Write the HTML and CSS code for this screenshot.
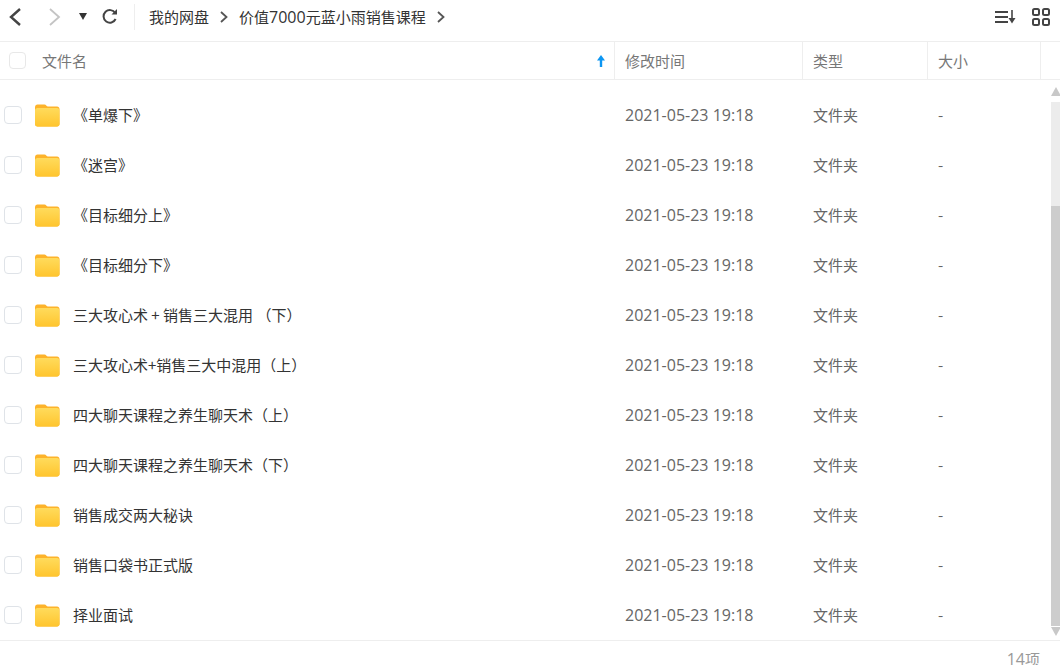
FILE: index.html
```html
<!DOCTYPE html>
<html lang="zh">
<head>
<meta charset="utf-8">
<title>我的网盘</title>
<link rel="stylesheet" href="styles.css">
</head>
<body>
<div class="app">
  <header class="toolbar">
    <svg class="ic-back" width="14" height="20" viewBox="0 0 14 20"><path d="M12 2 3 10l9 8" fill="none" stroke="#444" stroke-width="2.4"/></svg>
    <svg class="ic-forward" width="14" height="20" viewBox="0 0 14 20"><path d="M2 2l9 8-9 8" fill="none" stroke="#c4c4c4" stroke-width="1.8"/></svg>
    <svg class="ic-drop" width="9" height="7" viewBox="0 0 9 7"><path d="M0 0h8L4 7z" fill="#333"/></svg>
    <svg class="ic-refresh" width="17" height="17" viewBox="0 0 17 17"><path d="M14.2 5A6.300 6.300 0 1 0 14.600 11" fill="none" stroke="#444" stroke-width="2"/><path d="M10.500 6.500h5.500V1z" fill="#444"/></svg>
    <span class="divider"></span>
    <nav class="crumbs">
      <span>我的网盘</span>
      <svg class="sep" width="8" height="12" viewBox="0 0 8 12"><path d="M1 1l5.500 5L1 11" fill="none" stroke="#555" stroke-width="1.800"/></svg>
      <span>价值<span class="num">7000</span>元蓝小雨销售课程</span>
      <svg class="sep" width="8" height="12" viewBox="0 0 8 12"><path d="M1 1l5.500 5L1 11" fill="none" stroke="#555" stroke-width="1.800"/></svg>
    </nav>
    <div class="tools">
      <svg width="21" height="14" viewBox="0 0 21 14"><path d="M0 2h13M0 7h13M0 12h13" stroke="#444" stroke-width="2"/><path d="M17 0v9" stroke="#444" stroke-width="1.600"/><path d="M13.500 8h7L17 13.500z" fill="#444"/></svg>
      <svg width="18" height="18" viewBox="0 0 18 18"><g fill="none" stroke="#444" stroke-width="2"><rect x="1" y="1" width="6" height="6" rx="1.500"/><rect x="11" y="1" width="6" height="6" rx="1.500"/><rect x="1" y="11" width="6" height="6" rx="1.500"/><rect x="11" y="11" width="6" height="6" rx="1.500"/></g></svg>
    </div>
  </header>

  <div class="thead">
    <div class="th th-name">
      <span class="check check-head"></span>
      <span>文件名</span>
      <svg class="sort" width="10" height="12" viewBox="0 0 10 12"><path d="M5 0 9 5.500H6.200V12H3.800V5.500H1z" fill="#0d96f2"/></svg>
    </div>
    <div class="th th-time">修改时间</div>
    <div class="th th-type">类型</div>
    <div class="th th-size">大小</div>
    <div class="th th-end"></div>
  </div>

  <div class="body">
    <div class="rows">
      <div class="row"><span class="check"></span><svg class="folder" width="26" height="24" viewBox="0 0 26 24"><use href="#fd"/></svg><span class="name">《单爆下》</span><span class="time">2021-05-23 19:18</span><span class="type">文件夹</span><span class="size">-</span></div>
      <div class="row"><span class="check"></span><svg class="folder" width="26" height="24" viewBox="0 0 26 24"><use href="#fd"/></svg><span class="name">《迷宫》</span><span class="time">2021-05-23 19:18</span><span class="type">文件夹</span><span class="size">-</span></div>
      <div class="row"><span class="check"></span><svg class="folder" width="26" height="24" viewBox="0 0 26 24"><use href="#fd"/></svg><span class="name">《目标细分上》</span><span class="time">2021-05-23 19:18</span><span class="type">文件夹</span><span class="size">-</span></div>
      <div class="row"><span class="check"></span><svg class="folder" width="26" height="24" viewBox="0 0 26 24"><use href="#fd"/></svg><span class="name">《目标细分下》</span><span class="time">2021-05-23 19:18</span><span class="type">文件夹</span><span class="size">-</span></div>
      <div class="row"><span class="check"></span><svg class="folder" width="26" height="24" viewBox="0 0 26 24"><use href="#fd"/></svg><span class="name">三大攻心术 + 销售三大混用 （下）</span><span class="time">2021-05-23 19:18</span><span class="type">文件夹</span><span class="size">-</span></div>
      <div class="row"><span class="check"></span><svg class="folder" width="26" height="24" viewBox="0 0 26 24"><use href="#fd"/></svg><span class="name">三大攻心术+销售三大中混用（上）</span><span class="time">2021-05-23 19:18</span><span class="type">文件夹</span><span class="size">-</span></div>
      <div class="row"><span class="check"></span><svg class="folder" width="26" height="24" viewBox="0 0 26 24"><use href="#fd"/></svg><span class="name">四大聊天课程之养生聊天术（上）</span><span class="time">2021-05-23 19:18</span><span class="type">文件夹</span><span class="size">-</span></div>
      <div class="row"><span class="check"></span><svg class="folder" width="26" height="24" viewBox="0 0 26 24"><use href="#fd"/></svg><span class="name">四大聊天课程之养生聊天术（下）</span><span class="time">2021-05-23 19:18</span><span class="type">文件夹</span><span class="size">-</span></div>
      <div class="row"><span class="check"></span><svg class="folder" width="26" height="24" viewBox="0 0 26 24"><use href="#fd"/></svg><span class="name">销售成交两大秘诀</span><span class="time">2021-05-23 19:18</span><span class="type">文件夹</span><span class="size">-</span></div>
      <div class="row"><span class="check"></span><svg class="folder" width="26" height="24" viewBox="0 0 26 24"><use href="#fd"/></svg><span class="name">销售口袋书正式版</span><span class="time">2021-05-23 19:18</span><span class="type">文件夹</span><span class="size">-</span></div>
      <div class="row"><span class="check"></span><svg class="folder" width="26" height="24" viewBox="0 0 26 24"><use href="#fd"/></svg><span class="name">择业面试</span><span class="time">2021-05-23 19:18</span><span class="type">文件夹</span><span class="size">-</span></div>
    </div>
    <div class="scrollbar">
      <span class="arrow arrow-up"></span>
      <div class="track"><div class="thumb"></div></div>
      <span class="arrow arrow-down"></span>
    </div>
  </div>

  <footer class="footer"><span class="num">14</span>项</footer>
</div>
<svg class="defs" width="0" height="0">
  <defs>
    <linearGradient id="fg" x1="0" y1="0" x2="0" y2="1"><stop offset="0" stop-color="#ffdb5c"/><stop offset="1" stop-color="#ffc52e"/></linearGradient>
    <symbol id="fd" viewBox="0 0 26 24">
      <path d="M1 4.500C1 2.500 2 1.500 3.500 1.500H10.500C12 1.500 12.500 3.500 14 3.500H23C24.500 3.500 25.500 4.500 25.500 6V21C25.500 22.500 24.500 23.500 23 23.500H3.500C2 23.500 1 22.500 1 21Z" fill="#fdb32b"/>
      <path d="M1 7.500C1 6 2 5 3.500 5H23C24.500 5 25.500 6 25.500 7.500V21C25.500 22.500 24.500 23.500 23 23.500H3.500C2 23.500 1 22.500 1 21Z" fill="url(#fg)"/>
    </symbol>
  </defs>
</svg>
</body>
</html>
```

FILE: styles.css
```css
* { box-sizing: border-box; }
html, body { margin: 0; padding: 0; height: 100%; background: #fff; overflow: hidden; }
body { font-family: "Noto Sans CJK SC", "Open Sans", sans-serif; font-size: 15px; color: #333; }
.app { width: 1060px; height: 665px; display: flex; flex-direction: column; }
.defs { position: absolute; }

.toolbar { height: 42px; flex: none; display: flex; align-items: center; padding: 0 10px 8px 8px; border-bottom: 1px solid #eeeeee; }
.ic-forward { margin-left: 26px; }
.ic-drop { margin-left: 17px; }
.ic-refresh { margin-left: 13px; }
.divider { width: 1px; height: 26px; background: #eeeeee; margin-left: 16px; }
.crumbs { display: flex; align-items: center; margin-left: 14px; gap: 11px; color: #333; white-space: nowrap; }
.num { font-family: "Open Sans", sans-serif; font-size: 16px; }
.tools { margin-left: auto; display: flex; align-items: center; gap: 16px; }

.thead { height: 38px; flex: none; display: flex; border-bottom: 1px solid #eeeeee; color: #777; }
.th { display: flex; align-items: center; border-right: 1px solid #eeeeee; padding-left: 10px; }
.th-name { width: 615px; padding-left: 9px; }
.th-time { width: 188px; }
.th-type { width: 125px; }
.th-size { width: 113px; }
.th-end { flex: 1; border-right: 0; }
.check { width: 18px; height: 18px; border: 1.5px solid #dfe3e8; border-radius: 4px; background: #fff; flex: none; margin-bottom: 1px; }
.check-head { width: 17px; height: 17px; margin-right: 16px; border-color: #e8e8e8; }
.sort { margin-left: auto; margin-right: 8px; }

.body { flex: 1; min-height: 0; display: flex; }
.rows { flex: 1; min-width: 0; padding-top: 10px; overflow: hidden; }
.row { height: 50px; display: flex; align-items: center; padding-left: 4px; }
.folder { margin-left: 12px; flex: none; }
.name { width: 552px; margin-left: 13px; flex: none; white-space: nowrap; color: #333; padding-bottom: 2px; }
.time { width: 188px; flex: none; color: #666; font-family: "Open Sans", sans-serif; font-size: 16px; }
.type { width: 125px; flex: none; color: #666; padding-bottom: 2px; }
.size { color: #666; padding-bottom: 2px; }

.scrollbar { width: 9px; flex: none; display: flex; flex-direction: column; align-items: center; padding-top: 7px; padding-bottom: 4px; }
.arrow { width: 0; height: 0; border-left: 5px solid transparent; border-right: 5px solid transparent; flex: none; }
.arrow-up { border-bottom: 9px solid #c8c8c8; }
.arrow-down { border-top: 9px solid #c8c8c8; }
.track { flex: 1; width: 9px; background: #ececec; margin: 6px 0 1px; display: flex; flex-direction: column; justify-content: flex-end; }
.thumb { height: 420px; background: #cdcdcd; }

.footer { height: 25px; flex: none; border-top: 1px solid #eeeeee; text-align: right; padding-right: 20px; padding-top: 8px; line-height: 20px; color: #999; }
```
